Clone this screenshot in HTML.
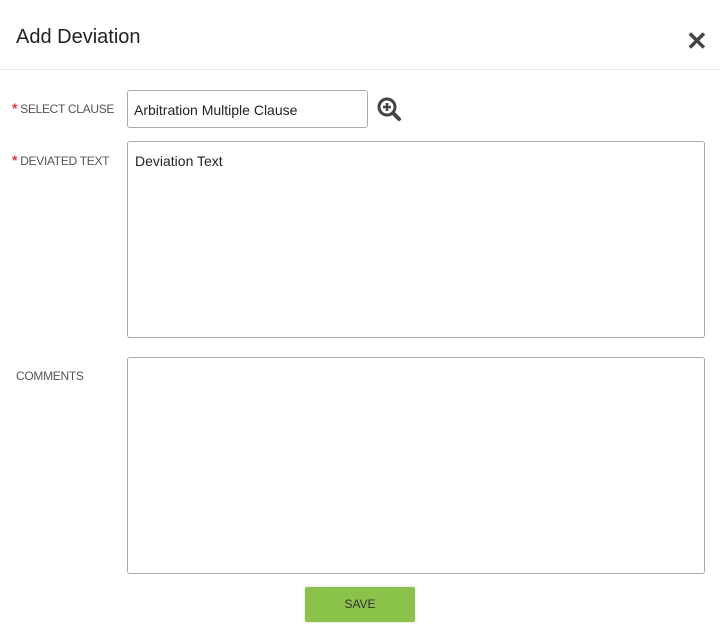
<!DOCTYPE html>
<html><head><style>
body{margin:0;width:720px;height:632px;background:#fff;font-family:"Liberation Sans",sans-serif;position:relative;overflow:hidden}
.a{position:absolute}
.lbl{font-size:12px;color:#555;letter-spacing:-0.3px}
.star{color:#e53935;font-size:14px;font-weight:bold}
.box{border:1px solid #aaa;border-radius:3px;box-sizing:border-box}
</style></head><body>
<div class="a" style="left:16px;top:26px;font-size:20px;color:#222">Add Deviation</div>
<div class="a" style="left:686px;top:26px;font-size:26px;font-weight:bold;color:#444;line-height:30px">✕</div>
<div class="a" style="left:0;top:69px;width:720px;height:1px;background:#e8e8e8"></div>
<div class="a lbl" style="left:12px;top:100px"><span class="star">*</span> SELECT CLAUSE</div>
<div class="a box" style="left:127px;top:90px;width:241px;height:38px;font-size:14px;color:#222;padding:11px 6px">Arbitration Multiple Clause</div>
<svg class="a" style="left:376px;top:96px" width="26" height="26" viewBox="0 0 26 26"><circle cx="11" cy="11" r="8" fill="none" stroke="#444" stroke-width="3"/><path d="M7 11h8M11 7v8" stroke="#444" stroke-width="2.5"/><path d="M17 17l6 6" stroke="#444" stroke-width="4" stroke-linecap="round"/></svg>
<div class="a lbl" style="left:12px;top:152px"><span class="star">*</span> DEVIATED TEXT</div>
<div class="a box" style="left:127px;top:141px;width:578px;height:197px;font-size:14px;color:#222;padding:11px 7px">Deviation Text</div>
<div class="a lbl" style="left:16px;top:369px">COMMENTS</div>
<div class="a box" style="left:127px;top:357px;width:578px;height:217px"></div>
<div class="a" style="left:305px;top:587px;width:110px;height:35px;background:#8bc34a;border-radius:2px;box-shadow:0 0 2px #ccc;text-align:center;line-height:35px;font-size:12px;color:#333">SAVE</div>
</body></html>
